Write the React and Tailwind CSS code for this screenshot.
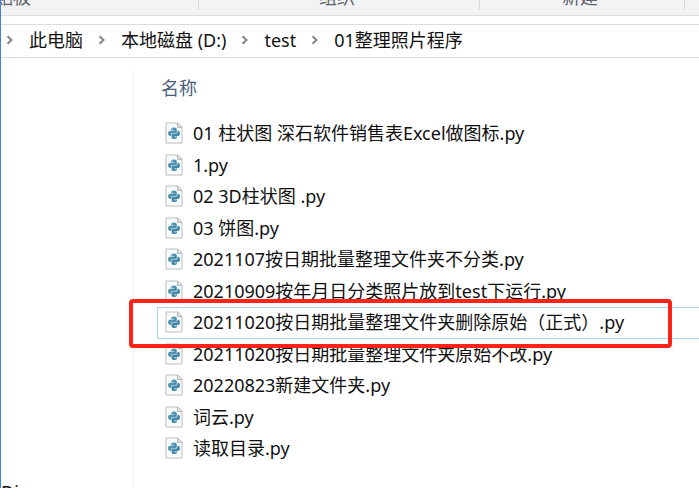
import React, { useState } from 'react';

const ribbonGroups = [
  { name: '剪贴板', className: 'w-[197px] -indent-6 text-left' },
  { name: '组织', className: 'w-[280px] pr-1 text-center' },
  { name: '新建', className: 'w-[204px] pr-1 text-center' },
];

const crumbs = ['此电脑', '本地磁盘 (D:)', 'test', '01整理照片程序'];

const files = [
  '01 柱状图 深石软件销售表Excel做图标.py',
  '1.py',
  '02 3D柱状图 .py',
  '03 饼图.py',
  '2021107按日期批量整理文件夹不分类.py',
  '20210909按年月日分类照片放到test下运行.py',
  '20211020按日期批量整理文件夹删除原始（正式）.py',
  '20211020按日期批量整理文件夹原始不改.py',
  '20220823新建文件夹.py',
  '词云.py',
  '读取目录.py',
];

const Chevron = () => (
  <svg className="w-2 h-3 shrink-0" viewBox="0 0 8 12" fill="none" stroke="#858585" strokeWidth="2">
    <path d="M1.5 2.2 5.5 6 1.5 9.8" />
  </svg>
);

const PythonFileIcon = () => (
  <svg className="w-[18px] h-[22px] shrink-0" viewBox="0 0 18 22">
    <path d="M1 1H13L17 5V21H1Z" fill="#f8fafc" stroke="#bcbec0" />
    <path d="M12.5 1V5.5H17" fill="#dedede" stroke="#b4b6b8" />
    <path
      d="M6.2 7.6Q6.2 5.6 9 5.6T11.8 7.6V9.9Q11.8 11 10.7 11H7.7Q6.1 11 6.1 12.6V14H5Q3 14 3 11.3T5 8.7H9V8.2H6.2Z"
      fill="#5093b0"
    />
    <path
      d="M12.4 8.7H13.2Q15 8.7 15 11.3T13.2 14H9.2V14.5H12V15.1Q12 17.1 9.2 17.1T6.6 15.1V12.8Q6.6 11.6 7.8 11.6H10.8Q12.4 11.6 12.4 10Z"
      fill="#448aa8"
    />
    <circle cx="7.7" cy="7.1" r=".4" fill="#fff" />
    <circle cx="10.4" cy="15.7" r=".4" fill="#fff" />
  </svg>
);

const App = () => {
  const [selected, setSelected] = useState(6);

  return (
    <div className="h-screen flex flex-col overflow-hidden border-l border-[#3f7fe0] bg-white text-lg text-[#111] font-['Noto_Sans','Noto_Sans_CJK_SC',sans-serif]">
      {/* Ribbon group captions */}
      <div className="flex h-4 shrink-0 bg-[#f1f3f5] border-b border-[#dcdddf] text-[#606368]">
        {ribbonGroups.map((group) => (
          <div key={group.name} className="flex h-2.5 border-r border-[#d9dbdd]">
            <span className={`${group.className} -mt-[13px] h-5 leading-5 whitespace-nowrap`}>{group.name}</span>
          </div>
        ))}
      </div>

      {/* Address bar */}
      <nav className="flex items-center shrink-0 mt-2 h-[34px] pl-[5px] pb-0.5 gap-[15px] border-y border-[#dcdcdc]">
        {crumbs.map((crumb) => (
          <React.Fragment key={crumb}>
            <Chevron />
            <a href="#" className="leading-6 whitespace-nowrap">{crumb}</a>
          </React.Fragment>
        ))}
      </nav>

      <div className="flex flex-1 min-h-0">
        <aside className="flex flex-col justify-end w-[133px] shrink-0 mt-2.5 border-r border-[#f3f3f3]">
          <span className="-mb-4 leading-6">Di</span>
        </aside>

        <main className="flex-1 min-w-0 pl-[23px]">
          <div className="mt-[18px] mb-[18px] h-6 pl-1 leading-6 text-[#4c607a]">名称</div>
          <ul>
            {files.map((file, index) => (
              <li key={file} className="relative odd:h-8 even:h-[31px]">
                <button
                  type="button"
                  onClick={() => setSelected(index)}
                  className={`flex items-center w-full h-full pl-[7px] pb-0.5 gap-2.5 whitespace-nowrap border border-r-0 ${
                    selected === index ? 'border-[#a6d3f5]' : 'border-transparent'
                  }`}
                >
                  <PythonFileIcon />
                  <span className="leading-6">{file}</span>
                </button>
                {index === 6 && (
                  <div className="absolute z-10 -top-2 -left-7 w-[543px] h-[49px] rounded-sm border-4 border-[#fb2416] pointer-events-none" />
                )}
              </li>
            ))}
          </ul>
        </main>
      </div>
    </div>
  );
};

export default App;
